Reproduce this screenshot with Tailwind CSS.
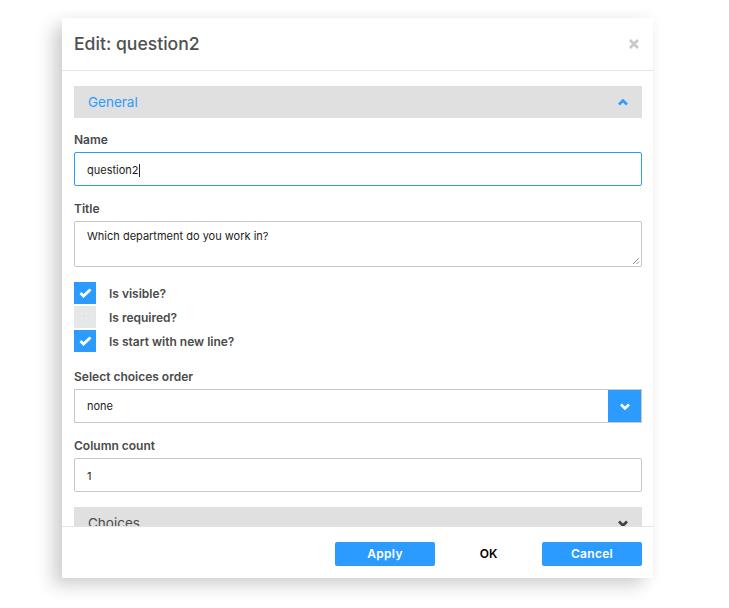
<!DOCTYPE html>
<html lang="en">
  <head>
    <meta charset="UTF-8" />
    <title>Edit question</title>
    <script src="https://cdn.jsdelivr.net/npm/@tailwindcss/browser@4"></script>
  </head>
  <body class="bg-white h-[608px] overflow-hidden font-['Inter',sans-serif] text-[#4a4a4a]">
    <div class="pt-[18px] pl-[62px]">
      <div class="w-[591px] h-[560px] bg-white flex flex-col shadow-[-10px_8px_16px_rgba(0,0,0,0.16),0_0_14px_rgba(0,0,0,0.05)]">
        <header class="h-[53px] shrink-0 border-b border-[#e3e3e3] pl-3 pr-[14px] flex justify-between items-center">
          <h1 class="text-[17.6px] font-medium text-[#505050] leading-none">Edit: question2</h1>
          <svg width="10" height="10" viewBox="0 0 10 10">
            <path d="M1 1l8 8M9 1l-8 8" stroke="#c8c8c8" stroke-width="2.6" />
          </svg>
        </header>

        <main class="flex-1 min-h-0 overflow-hidden pl-3 pr-[11px] pt-[15px]">
          <div class="h-8 bg-[#e0e0e0] px-[14px] flex justify-between items-center text-[13.5px] text-[#2c9bff]">
            <span>General</span>
            <svg width="10" height="7" viewBox="0 0 10 7">
              <path d="M1 5.5l4-4 4 4" fill="none" stroke="#2c9bff" stroke-width="2.6" />
            </svg>
          </div>

          <label class="block mt-[15px] h-[19px] text-xs leading-[13px] font-semibold">Name</label>
          <div class="h-[34px] border border-[#2c9bff] rounded-[2px] pl-3 pt-[2px] flex items-center text-[11px] text-[#222]">
            question2<span class="w-px h-[13px] bg-[#222]"></span>
          </div>

          <label class="block mt-[15px] h-[20px] text-xs leading-[16px] font-semibold">Title</label>
          <div class="relative h-[46px] border border-[#c8c8c8] rounded-[2px] pl-3 pt-[6px] text-[11px] leading-4 text-[#222]">
            Which department do you work in?
            <svg width="8" height="8" viewBox="0 0 8 8" class="absolute right-px bottom-px">
              <path d="M1 7l6-6M4.5 7L7 4.5" stroke="#777" stroke-width="0.8" />
            </svg>
          </div>

          <div class="mt-[15px] flex flex-col gap-[2px] text-xs font-semibold">
            <div class="flex items-center gap-[13px] h-[22px]">
              <span class="w-[22px] h-[22px] bg-[#2c9bff] flex items-center justify-center">
                <svg width="13" height="10" viewBox="0 0 13 10">
                  <path d="M1.5 5l3 3 7-6.5" fill="none" stroke="#fff" stroke-width="2.8" />
                </svg>
              </span>
              <span class="pt-[2px]">Is visible?</span>
            </div>
            <div class="flex items-center gap-[13px] h-[22px]">
              <span class="w-[22px] h-[22px] bg-[#e6e7e8] bg-[radial-gradient(#f6f6f6_0.6px,transparent_0.7px)] bg-[length:5px_5px]"></span>
              <span class="pt-[2px]">Is required?</span>
            </div>
            <div class="flex items-center gap-[13px] h-[22px]">
              <span class="w-[22px] h-[22px] bg-[#2c9bff] flex items-center justify-center">
                <svg width="13" height="10" viewBox="0 0 13 10">
                  <path d="M1.5 5l3 3 7-6.5" fill="none" stroke="#fff" stroke-width="2.8" />
                </svg>
              </span>
              <span class="pt-[2px]">Is start with new line?</span>
            </div>
          </div>

          <label class="block mt-[18px] h-[19px] text-xs leading-[13px] font-semibold">Select choices order</label>
          <div class="h-[34px] border border-[#c8c8c8] pl-3 flex justify-between items-center text-[11px] text-[#222]">
            none
            <span class="w-[33px] h-full bg-[#2c9bff] flex items-center justify-center">
              <svg width="10" height="7" viewBox="0 0 10 7">
                <path d="M1 1.5l4 4 4-4" fill="none" stroke="#fff" stroke-width="2.6" />
              </svg>
            </span>
          </div>

          <label class="block mt-[15px] h-[20px] text-xs leading-[16px] font-semibold">Column count</label>
          <div class="h-[34px] border border-[#c8c8c8] rounded-[2px] pl-3 pt-[2px] flex items-center text-[11px] text-[#222]">1</div>

          <div class="mt-[15px] h-8 bg-[#e0e0e0] px-[14px] flex justify-between items-center text-[13.5px] text-[#4a4a4a]">
            <span>Choices</span>
            <svg width="10" height="7" viewBox="0 0 10 7">
              <path d="M1 1.5l4 4 4-4" fill="none" stroke="#404040" stroke-width="2.6" />
            </svg>
          </div>
        </main>

        <footer class="h-[52px] shrink-0 border-t border-[#e3e3e3] pr-[11px] pt-[15px] flex justify-end text-xs font-semibold">
          <button class="w-[100px] h-6 bg-[#2c9bff] text-white rounded-[2px] tracking-[0.3px]">Apply</button>
          <button class="w-[107px] h-6 text-black">OK</button>
          <button class="w-[100px] h-6 bg-[#2c9bff] text-white rounded-[2px] tracking-[0.3px]">Cancel</button>
        </footer>
      </div>
    </div>
  </body>
</html>
